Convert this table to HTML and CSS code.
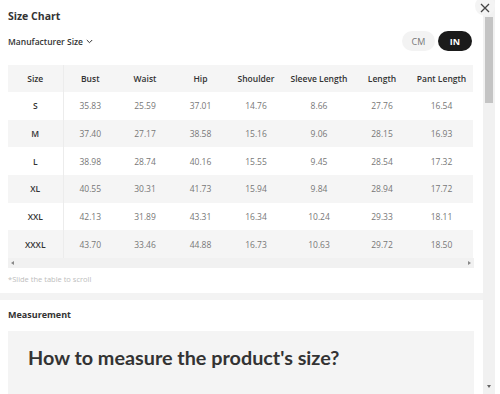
FILE: index.html
```html
<!DOCTYPE html>
<html lang="en">
<head>
    <meta charset="UTF-8">
    <meta name="viewport" content="width=device-width, initial-scale=1.0">
    <title>Size Chart</title>
    <link rel="stylesheet" href="styles.css">
</head>
<body>
    <div class="dialog">
        <!-- Botão fechar -->
        <button class="close-btn" aria-label="Close">
            <svg width="10" height="10" viewBox="0 0 10 10"><path d="M1 1L9 9M9 1L1 9" stroke="#444" stroke-width="1.3" fill="none"/></svg>
        </button>

        <div class="dialog-body">
            <!-- Tabela de medidas -->
            <section class="panel chart-panel">
                <h2 class="panel-title">Size Chart</h2>
                <div class="chart-toolbar">
                    <button class="size-select">Manufacturer Size
                        <svg width="7" height="5" viewBox="0 0 7 5"><path d="M0.8 1L3.5 3.7L6.2 1" stroke="#333" stroke-width="1" fill="none"/></svg>
                    </button>
                    <div class="unit-toggle">
                        <button class="unit">CM</button>
                        <button class="unit active">IN</button>
                    </div>
                </div>

                <div class="table-scroll">
                    <table class="size-table">
                        <colgroup>
                            <col style="width:55px"><col style="width:54px"><col style="width:56px"><col style="width:55px">
                            <col style="width:56px"><col style="width:70px"><col style="width:56px"><col style="width:63px">
                        </colgroup>
                        <thead>
                            <tr>
                                <th class="size-col">Size</th>
                                <th>Bust</th>
                                <th>Waist</th>
                                <th>Hip</th>
                                <th>Shoulder</th>
                                <th>Sleeve Length</th>
                                <th>Length</th>
                                <th>Pant Length</th>
                            </tr>
                        </thead>
                        <tbody>
                            <tr><td class="size-col">S</td><td>35.83</td><td>25.59</td><td>37.01</td><td>14.76</td><td>8.66</td><td>27.76</td><td>16.54</td></tr>
                            <tr><td class="size-col">M</td><td>37.40</td><td>27.17</td><td>38.58</td><td>15.16</td><td>9.06</td><td>28.15</td><td>16.93</td></tr>
                            <tr><td class="size-col">L</td><td>38.98</td><td>28.74</td><td>40.16</td><td>15.55</td><td>9.45</td><td>28.54</td><td>17.32</td></tr>
                            <tr><td class="size-col">XL</td><td>40.55</td><td>30.31</td><td>41.73</td><td>15.94</td><td>9.84</td><td>28.94</td><td>17.72</td></tr>
                            <tr><td class="size-col">XXL</td><td>42.13</td><td>31.89</td><td>43.31</td><td>16.34</td><td>10.24</td><td>29.33</td><td>18.11</td></tr>
                            <tr><td class="size-col">XXXL</td><td>43.70</td><td>33.46</td><td>44.88</td><td>16.73</td><td>10.63</td><td>29.72</td><td>18.50</td></tr>
                        </tbody>
                    </table>
                    <div class="h-scrollbar">
                        <span class="arrow arrow-left"></span>
                        <span class="arrow arrow-right"></span>
                    </div>
                </div>
                <p class="scroll-hint">*Slide the table to scroll</p>
            </section>

            <!-- Como medir -->
            <section class="panel measure-panel">
                <h3 class="panel-subtitle">Measurement</h3>
                <div class="measure-box">
                    <h4 class="measure-title">How to measure the product's size?</h4>
                </div>
            </section>
        </div>

        <!-- Barra de rolagem -->
        <div class="v-scrollbar">
            <div class="v-thumb"></div>
            <span class="arrow arrow-down"></span>
        </div>
    </div>
</body>
</html>
```

FILE: styles.css
```css
body {
    margin: 0;
    padding: 0;
    background-color: #fff;
    font-family: 'Open Sans', 'Segoe UI', sans-serif;
    color: #333;
}

button {
    font-family: inherit;
    border: none;
    background: none;
    padding: 0;
    cursor: pointer;
}

/* Janela */
.dialog {
    position: relative;
    width: 495px;
    height: 394px;
    display: flex;
}

.close-btn {
    position: absolute;
    top: -4px;
    right: 0;
    width: 20px;
    height: 20px;
    border-radius: 50%;
    background-color: #f4f4f4;
    display: flex;
    justify-content: center;
    align-items: center;
    padding-top: 4px;
    z-index: 2;
}

.dialog-body {
    flex: 1;
    overflow: hidden;
    background-color: #f3f3f3;
    display: flex;
    flex-direction: column;
    gap: 7px;
}

/* Barra de rolagem vertical */
.v-scrollbar {
    width: 12px;
    background-color: #f1f1f1;
    display: flex;
    flex-direction: column;
    align-items: center;
}

.v-thumb {
    width: 8px;
    height: 86px;
    margin-top: 17px;
    background-color: #c4c4c4;
}

.arrow {
    width: 0;
    height: 0;
    border: 2px solid transparent;
}

.arrow-down {
    margin-top: auto;
    margin-bottom: 6px;
    border-top: 3px solid #666;
    border-bottom: 0;
}

/* Painéis */
.panel {
    background-color: #fff;
    padding: 8px 9px 8px 8px;
    flex-shrink: 0;
}

.panel-title {
    margin: 0;
    font-size: 10.5px;
    line-height: 16px;
    font-weight: 700;
    color: #333;
}

.chart-toolbar {
    display: flex;
    align-items: center;
    justify-content: space-between;
    margin-top: 7px;
    padding-right: 2px;
}

.size-select {
    display: flex;
    align-items: center;
    gap: 3px;
    font-size: 8.5px;
    font-weight: 600;
    color: #333;
}

.unit-toggle {
    display: flex;
    gap: 3px;
}

.unit {
    width: 33px;
    height: 20px;
    border-radius: 10px;
    font-size: 9px;
    background-color: #f3f3f3;
    color: #777;
}

.unit.active {
    width: 34px;
    background-color: #1b1b1b;
    color: #fff;
    font-weight: 700;
}

/* Tabela */
.table-scroll {
    margin-top: 14px;
}

.size-table {
    width: 465px;
    table-layout: fixed;
    border-collapse: collapse;
    font-size: 8.5px;
}

.size-table th,
.size-table td {
    padding: 0;
    text-align: center;
    white-space: nowrap;
}

.size-table th {
    height: 27px;
    font-weight: 600;
    color: #333;
    background-color: #f5f5f5;
}

.size-table td {
    height: 27.7px;
    color: #777;
}

.size-table tbody tr:nth-child(even) {
    background-color: #f5f5f5;
}

.size-table .size-col {
    font-weight: 600;
    color: #333;
    border-right: 1px solid #ececec;
}

.h-scrollbar {
    height: 10px;
    padding: 0 3px;
    background-color: #f1f1f1;
    display: flex;
    align-items: center;
    justify-content: space-between;
}

.arrow-left {
    border-right: 3px solid #888;
    border-left: 0;
}

.arrow-right {
    border-left: 3px solid #888;
    border-right: 0;
}

.scroll-hint {
    margin: 5px 0 0;
    font-size: 7.5px;
    line-height: 12px;
    color: #bdbdbd;
}

/* Medição */
.measure-panel {
    flex: 1;
    padding: 9px 9px 0 8px;
}

.panel-subtitle {
    margin: 0;
    font-size: 9px;
    line-height: 12px;
    font-weight: 700;
    color: #333;
}

.measure-box {
    margin-top: 10px;
    min-height: 200px;
    padding: 13px 20px;
    background-color: #f4f4f4;
}

.measure-title {
    margin: 0;
    font-family: Lato, sans-serif;
    font-size: 19.8px;
    line-height: 26px;
    font-weight: 700;
    color: #333;
}
```
